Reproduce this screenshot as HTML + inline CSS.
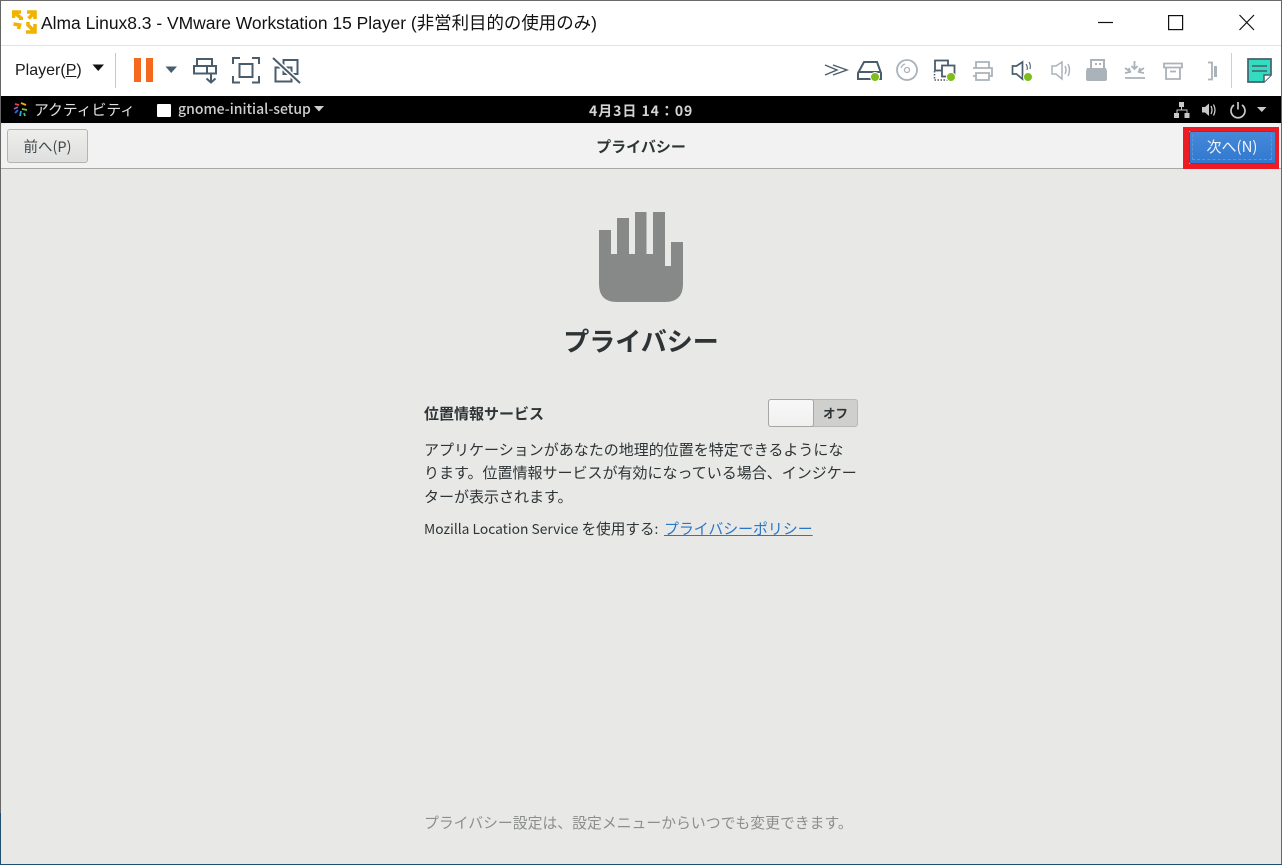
<!DOCTYPE html>
<html lang="ja"><head><meta charset="utf-8"><title>Alma Linux8.3</title>
<style>
html,body{margin:0;padding:0}
body{width:1282px;height:865px;overflow:hidden;position:relative;background:#e8e8e7;font-family:"Liberation Sans","Noto Sans CJK JP",sans-serif}
div,svg{position:absolute}
.t{white-space:nowrap;line-height:1}
.g{font-family:"Noto Sans CJK JP",sans-serif;color:#2e3436}
</style></head><body>
<div style="left:0;top:0;width:1282px;height:96px;background:#fff"></div>
<div style="left:0;top:45px;width:1282px;height:1px;background:#e3e3e3"></div>
<div style="left:0;top:0;width:1282px;height:1px;background:#6a6a6a"></div>
<div style="left:0;top:0;width:1px;height:865px;background:#666"></div>
<div style="left:1281px;top:0;width:1px;height:865px;background:#666"></div>

<svg style="left:12px;top:10px" width="25" height="24" viewBox="0 0 25 24" fill="none" stroke="#f0b400" stroke-width="3.600"><path d="M1.500 8V2H9M2.500 2.500l7 6M15 2H23V9M22.500 2.500l-6 6M1.500 14l6 1-1 4M23 14V22H14M22 21l-6-6v-3" /><path d="M7 7h4v3H7z" fill="#f0b400" stroke="none"/></svg>
<div class="t" style="left:41px;top:15px;font-size:17.450px;color:#111;font-family:'Liberation Sans','Noto Sans CJK JP',sans-serif">Alma Linux8.3 - VMware Workstation 15 Player (非営利目的の使用のみ)</div>

<svg style="left:1090px;top:8px" width="170" height="30" viewBox="0 0 170 30" fill="none" stroke="#111" stroke-width="1.200"><path d="M8 14.500h15"/><rect x="78.600" y="7.600" width="14" height="14"/><path d="M149.500 7l14.500 15M164 7l-14.500 15"/></svg>

<div class="t" style="left:15px;top:63px;font-size:16px;color:#1a1a1a">Player(<span style="text-decoration:underline">P</span>)</div>
<svg style="left:92px;top:64px" width="13" height="8"><path d="M0.500 0.500h11.500L6.200 7z" fill="#111"/></svg>
<div style="left:115px;top:53px;width:1px;height:35px;background:#c8c8c8"></div>
<div style="left:134px;top:58px;width:7px;height:24px;background:#f5691e"></div>
<div style="left:146px;top:58px;width:7px;height:24px;background:#f5691e"></div>
<svg style="left:165px;top:66px" width="13" height="8"><path d="M0.500 0.500h11.500L6.200 7z" fill="#4a5d6c"/></svg>

<svg style="left:190px;top:56px" width="112" height="30" viewBox="0 0 112 30" fill="none" stroke="#4a5d6c" stroke-width="2">
<path d="M7 10V3h15v7M4 10h22v7.500H4zM17 10v7.500M21 17.500v9M16.500 22.500l4.500 4 4.500-4"/>
<path d="M43 8V2h7M62 2h7V8M43 20v6.500h7M62 26.500h7V20"/>
<rect x="49.500" y="8" width="13" height="13"/>
<rect x="93.500" y="4" width="14" height="14"/>
<rect x="85.500" y="11.500" width="16" height="14"/>
<path d="M83 2l27 25" stroke="#fff" stroke-width="5"/>
<path d="M83 2l27 25"/>
</svg>

<svg style="left:824px;top:56px" width="300" height="30" viewBox="0 0 300 30" fill="none" stroke="#4a5d6c" stroke-width="1.700">
<path d="M1 9l12 5-12 5M9 9l14 5-14 5" stroke-width="1.400"/>
<path d="M34 23V17L40 6H53L57 17V23ZM34 16H57" stroke-width="2"/><circle cx="51" cy="21" r="4.500" fill="#7ebe18" stroke="#fff" stroke-width="1"/>
<circle cx="83" cy="14" r="10" stroke="#a9b3b9" stroke-width="1.800"/><circle cx="83" cy="14" r="2.500" stroke="#a9b3b9" stroke-width="1.300"/><path d="M77 12a6 6 0 0 1 4-4" stroke="#a9b3b9" stroke-width="1.200"/>
<rect x="111" y="4.500" width="13" height="10" stroke-width="1.800"/><rect x="118" y="9.500" width="12.500" height="11" fill="#fff" stroke-width="1.800"/><path d="M110.500 15v9h15" stroke-dasharray="1.500 1.500" stroke-width="1.500"/><circle cx="127" cy="21" r="4.500" fill="#7ebe18" stroke="#fff" stroke-width="1"/>
<path d="M152 12V6h13v6M149 12h19v8h-3M152 20h-3M152 17h13v7h-13z" stroke="#a9b3b9" stroke-width="1.800"/>
<path d="M188.500 10v8h4l6 5V6l-6 4z" stroke-width="1.700"/><path d="M202 8q2 3 1 6M205 6q2 3 1 7" stroke-width="1.100"/><circle cx="204" cy="21" r="4.500" fill="#7ebe18" stroke="#fff" stroke-width="1"/>
<path d="M228 10v8h4l6 5V6l-6 4zM241 10q2 4 0 8M244 8q3 6 0 12" stroke="#a9b3b9" stroke-width="1.500"/>
<path d="M266 12V3h15v9h1l1 3v8q0 2-2 2h-17q-2 0-2-2v-8l1-3z" fill="#a9b3b9" stroke="none"/><path d="M268 5h11v7h-11z" fill="#fff" stroke="none"/><path d="M271 7h2v2h-2zM275 7h2v2h-2z" fill="#a9b3b9" stroke="none"/>
</svg>
<svg style="left:1124px;top:60px" width="100" height="24" viewBox="0 0 100 24" fill="none" stroke="#a9b3b9" stroke-width="1.800">
<path d="M10.500 1v8M7.500 6l3 3 3-3M1 8l6 4M1 13l5-1-1-4M20 8l-6 4M20 13l-5-1 1-4M1 18h20"/>
<path d="M40 3.500h18v4H40zM42 7.500v11.500h14V7.500M46 11.500h6"/>
<path d="M84 2.500h4v17h-4"/><path d="M90 6h3v11h-3z" fill="#a9b3b9" stroke="none"/>
</svg>
<div style="left:1231px;top:53px;width:1px;height:35px;background:#cfcfcf"></div>
<svg style="left:1247px;top:58px" width="25" height="25" viewBox="0 0 25 25"><path d="M1 1H24V17L17 24H1Z" fill="#33dcc1" stroke="#46606b" stroke-width="1.700"/><path d="M17 24V17H24" fill="#fff" stroke="#46606b" stroke-width="1.500"/><path d="M5 8H20M5 13H20" stroke="#46606b" stroke-width="1.500"/></svg>

<div style="left:1px;top:96px;width:1280px;height:27px;background:#000"></div>
<svg style="left:13px;top:102px" width="15" height="15" viewBox="0 0 15 15" fill="none" stroke-width="1.800"><path d="M2 2l4 1" stroke="#e8463c"/><path d="M8 1l5 2" stroke="#f5a623"/><path d="M1 7l4-2" stroke="#9b59b6"/><path d="M9 7l5 1" stroke="#7ac143"/><path d="M2 11l3-3" stroke="#2e6fd9"/><path d="M7 14l1-5" stroke="#29a8e0"/><path d="M11 11l1 3" stroke="#2ecc71"/></svg>
<div class="t g" style="left:34px;top:103px;font-size:14.800px;color:#e0e0e0">アクティビティ</div>
<div style="left:157px;top:104px;width:14px;height:13px;background:#fff;border-radius:1px"></div>
<div class="t g" style="left:178px;top:102px;font-size:14px;font-weight:500;color:#cfcfcf">gnome-initial-setup</div>
<svg style="left:314px;top:106px" width="10" height="6"><path d="M0 0h10L5 5.500z" fill="#cfcfcf"/></svg>
<div class="t g" style="left:589px;top:104px;font-size:14px;color:#d4d4d4;font-weight:700;letter-spacing:.95px">4月3日 14：09</div>
<svg style="left:1172px;top:101px" width="96" height="18" viewBox="0 0 96 18" fill="#c9c9c9"><path d="M7 1h5v5H7zM9 6h1v2.500h5.500V12h-1V9.500h-9V12h-1V8.500H9zM2 12h5v5H2zM12.500 12h5v5h-5z"/><path d="M30 6h3l4-3.500V15l-4-3.500h-3z"/><path d="M39 5q2 4 0 8M41.500 3.500q3 5.500 0 11" fill="none" stroke="#c9c9c9" stroke-width="1.300"/><path d="M62 4a7 7 0 1 0 8 0M66 1v7.500" fill="none" stroke="#c9c9c9" stroke-width="1.700"/><path d="M85 6h9.500l-4.750 5z"/></svg>

<div style="left:1px;top:123px;width:1280px;height:45px;background:#f2f2f2;border-radius:6px 6px 0 0;border-bottom:1px solid #a8a8a6"></div>
<div class="t g" style="left:7px;top:129px;width:79px;height:32px;border:1px solid #b4b4b2;border-radius:3px;background:linear-gradient(#eeeeed,#dfdfde);text-align:center;line-height:34px;font-size:14.500px;color:#40464a">前へ(P)</div>
<div class="t g" style="left:541px;top:139px;width:200px;text-align:center;font-size:15px;font-weight:700;color:#2e3436">プライバシー</div>

<div style="left:1189px;top:131px;width:85px;height:31px;background:linear-gradient(#4688d8,#3079d0);border:1px solid #1c5aa8;border-radius:2px"></div>
<div style="left:1192px;top:134px;width:80px;height:26px;border:1px dashed #5f95d6;border-top-color:transparent;box-sizing:border-box"></div>
<div class="t g" style="left:1190px;top:139px;width:84px;text-align:center;font-size:15px;color:#f0f4fa">次へ(N)</div>
<div style="left:1183px;top:127px;width:86px;height:33px;border:solid #ed1c24;border-width:4px 4px 5px 6px;box-sizing:content-box"></div>

<svg style="left:599px;top:212px" width="84" height="90" viewBox="0 0 84 90"><path fill="#878989" d="M0 18H12V42H18V6H30V42H36V0H47.500V42H54V0H66V54H72V30H84V72Q84 90 66 90H18Q0 90 0 72Z"/></svg>
<div class="t g" style="left:441px;top:328px;width:400px;text-align:center;font-size:26px;font-weight:700;color:#2e3436">プライバシー</div>

<div class="t g" style="left:424px;top:406px;font-size:15px;font-weight:700;color:#2e3436">位置情報サービス</div>
<div style="left:768px;top:399px;width:88px;height:26px;background:#cfcfcd;border:1px solid #b8b8b6;border-radius:3px"></div>
<div style="left:768px;top:399px;width:44px;height:26px;background:linear-gradient(#f8f8f8,#f0f0f0);border:1px solid #a6a6a4;border-radius:3px"></div>
<div class="t g" style="left:823px;top:407px;font-size:12.500px;font-weight:700;color:#2e3436">オフ</div>

<div class="t g" style="left:424px;top:442px;font-size:15px;color:#2e3436">アプリケーションがあなたの地理的位置を特定できるようにな</div>
<div class="t g" style="left:424px;top:465px;font-size:15px;color:#2e3436">ります。位置情報サービスが有効になっている場合、インジケー</div>
<div class="t g" style="left:424px;top:489px;font-size:15px;color:#2e3436">ターが表示されます。</div>
<div class="t g" style="left:424px;top:522px;font-size:13.800px;color:#2e3436">Mozilla Location Service <span style="font-size:14.600px">を使用する</span>:</div>
<div class="t g" style="left:664px;top:522px;font-size:14.900px;color:#2a76c6;text-decoration:underline">プライバシーポリシー</div>

<div class="t g" style="left:424px;top:816px;font-size:14.850px;color:#8c8e8e">プライバシー設定は、設定メニューからいつでも変更できます。</div>

<div style="left:0;top:864px;width:1282px;height:1px;background:#1f4e6e"></div>
<div style="left:0;top:813px;width:1px;height:52px;background:#1f4e6e"></div>
</body></html>
